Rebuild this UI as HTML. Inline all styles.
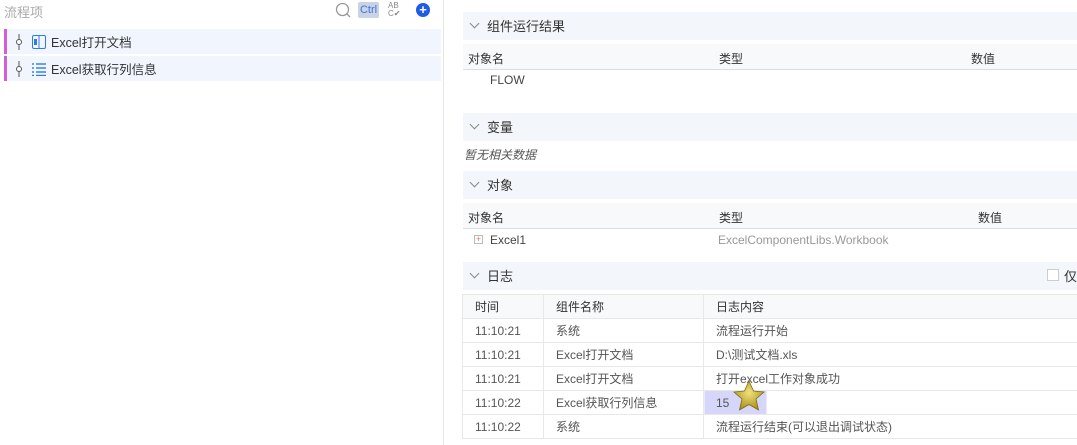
<!DOCTYPE html>
<html><head><meta charset="utf-8"><style>
*{margin:0;padding:0;box-sizing:border-box}
body{width:1077px;height:445px;overflow:hidden;background:#fff;font-family:"Liberation Sans","Noto Sans CJK SC",sans-serif;font-size:12px;color:#333;position:relative}
.abs{position:absolute}
.left{left:0;top:0;width:444px;height:445px;border-right:1px solid #e6e6e6}
.row{position:absolute;left:4px;width:437px;height:25px;background:#f0f5fe;border-left:3px solid #d25fd5}
.row span{position:absolute;left:44px;top:3px;font-size:12.5px;color:#333}
.sec{position:absolute;left:463px;width:614px;height:28px;background:#f3f6fa}
.sec span{position:absolute;left:24px;top:4px;font-size:13px;color:#333}
.sec i{position:absolute;left:8px;top:8px;width:7px;height:7px;border-right:1px solid #888;border-bottom:1px solid #888;transform:rotate(45deg)}
.th{position:absolute;left:463px;width:614px;height:26px;background:#f7f9fa;border-bottom:1px solid #ddd}
.th span{position:absolute;top:6px;color:#333}
.t{position:absolute;color:#444}
.log{position:absolute;left:462px;top:294px;border-collapse:collapse;width:620px}
.log td{border:1px solid #e8e8e8;height:24px;padding-left:12px;color:#555;font-size:12px}
.log tr:first-child td{background:#f7f9fa;color:#333;height:24px}
</style></head><body>
<div class="abs left">
  <div class="abs" style="left:4px;top:2px;color:#aaa;font-size:13px">流程项</div>
  <svg class="abs" style="left:335px;top:2px" width="16" height="16"><circle cx="7.5" cy="7.5" r="6" fill="none" stroke="#999" stroke-width="1.3"/><line x1="12" y1="12" x2="15" y2="15" stroke="#999" stroke-width="1.3"/></svg>
  <div class="abs" style="left:358px;top:2px;width:21px;height:16px;background:#c9d3e3;border-radius:2px;color:#3e74e5;font-size:11px;text-align:center;line-height:16px">Ctrl</div>
  <div class="abs" style="left:388px;top:2px;font-size:8px;color:#888;line-height:8px">AB<br>C✔</div>
  <div class="abs" style="left:416px;top:3px;width:14px;height:14px;border-radius:50%;background:#1e5be6;color:#fff;font-size:13px;font-weight:bold;line-height:14px;text-align:center">+</div>
  <div class="row" style="top:29px">
    <svg class="abs" style="left:8px;top:5px" width="8" height="16"><line x1="4" y1="0" x2="4" y2="16" stroke="#555"/><circle cx="4" cy="8" r="2.5" fill="#fff" stroke="#555"/></svg>
    <svg class="abs" style="left:25px;top:6px" width="14" height="14"><rect x="0.5" y="0.5" width="13" height="13" rx="1.5" fill="none" stroke="#2f7be6"/><line x1="7" y1="1" x2="7" y2="13" stroke="#2f7be6"/><rect x="2" y="4" width="3" height="6" fill="#2f7be6"/></svg>
    <span>Excel打开文档</span></div>
  <div class="row" style="top:56px">
    <svg class="abs" style="left:8px;top:5px" width="8" height="16"><line x1="4" y1="0" x2="4" y2="16" stroke="#555"/><circle cx="4" cy="8" r="2.5" fill="#fff" stroke="#555"/></svg>
    <svg class="abs" style="left:25px;top:7px" width="14" height="13"><g stroke="#2f7be6" stroke-width="1.4"><line x1="0" y1="1" x2="2" y2="1"/><line x1="4" y1="1" x2="14" y2="1"/><line x1="0" y1="5" x2="2" y2="5"/><line x1="4" y1="5" x2="14" y2="5"/><line x1="0" y1="9" x2="2" y2="9"/><line x1="4" y1="9" x2="14" y2="9"/><line x1="0" y1="12.5" x2="2" y2="12.5"/><line x1="4" y1="12.5" x2="14" y2="12.5"/></g></svg>
    <span>Excel获取行列信息</span></div>
</div>

<div class="sec" style="top:12px"><i></i><span>组件运行结果</span></div>
<div class="th" style="top:44px"><span style="left:5px">对象名</span><span style="left:256px">类型</span><span style="left:508px">数值</span></div>
<div class="t" style="left:490px;top:73px">FLOW</div>

<div class="sec" style="top:113px"><i></i><span>变量</span></div>
<div class="t" style="left:464px;top:146px;font-style:italic;color:#555">暂无相关数据</div>

<div class="sec" style="top:171px"><i></i><span>对象</span></div>
<div class="th" style="top:203px"><span style="left:5px">对象名</span><span style="left:256px">类型</span><span style="left:515px">数值</span></div>
<div class="abs" style="left:474px;top:235px;width:9px;height:9px;border:1px solid #bbb;font-size:9px;line-height:7px;text-align:center;color:#d77">+</div>
<div class="t" style="left:490px;top:233px">Excel1</div>
<div class="t" style="left:718px;top:233px;color:#999">ExcelComponentLibs.Workbook</div>

<div class="sec" style="top:262px"><i></i><span>日志</span>
  <div class="abs" style="left:584px;top:7px;width:12px;height:12px;border:1px solid #ccc;background:#fff"></div>
  <div class="abs" style="left:601px;top:4px;font-size:13px">仅</div></div>

<table class="log">
<tr><td style="width:81px">时间</td><td style="width:160px">组件名称</td><td>日志内容</td></tr>
<tr><td>11:10:21</td><td>系统</td><td>流程运行开始</td></tr>
<tr><td>11:10:21</td><td>Excel打开文档</td><td>D:\测试文档.xls</td></tr>
<tr><td>11:10:21</td><td>Excel打开文档</td><td>打开excel工作对象成功</td></tr>
<tr><td>11:10:22</td><td>Excel获取行列信息</td><td style="background:linear-gradient(90deg,#d6d6fa 62px,#fff 62px)">15</td></tr>
<tr><td>11:10:22</td><td>系统</td><td>流程运行结束(可以退出调试状态)</td></tr>
</table>
<svg class="abs" style="left:732px;top:380px" width="34" height="32" viewBox="0 0 34 32"><defs><radialGradient id="g" cx="50%" cy="40%" r="60%"><stop offset="0" stop-color="#f2e27a"/><stop offset="1" stop-color="#a98f1c"/></radialGradient></defs><polygon points="17,1 21.5,11 32,12 24,19 26.5,30 17,24.5 7.5,30 10,19 2,12 12.5,11" fill="url(#g)" stroke="#7d6a12" stroke-width="0.8"/></svg>
</body></html>
